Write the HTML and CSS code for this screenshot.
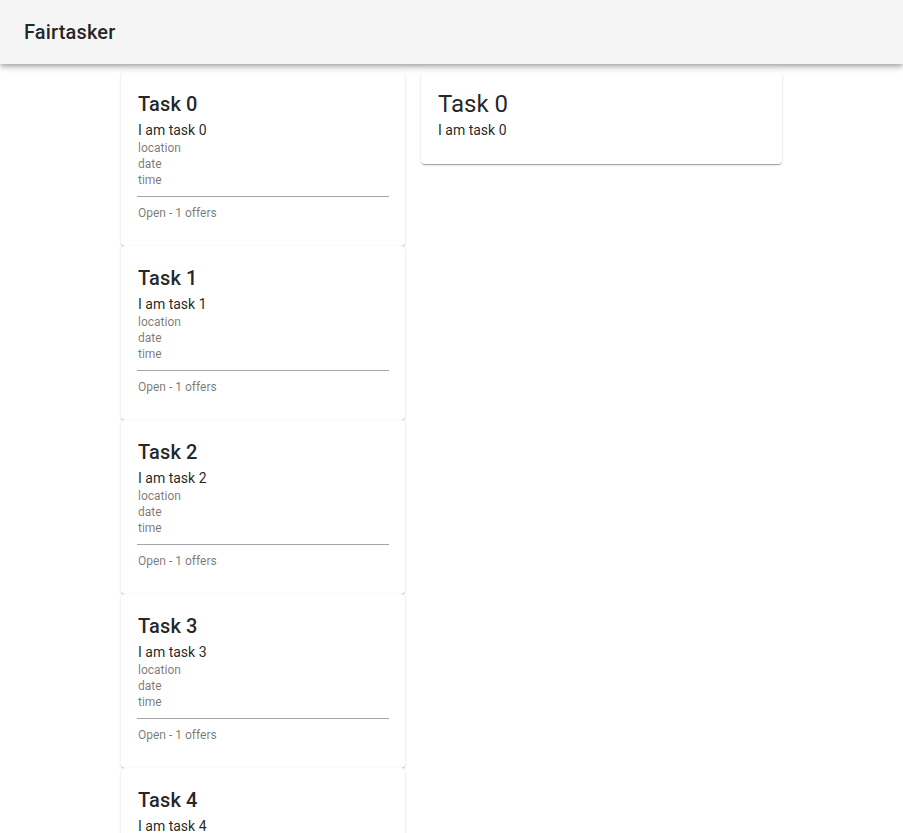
FILE: index.html
```html
<!DOCTYPE html>
<html>
<head>
<meta charset="utf-8">
<title>Fairtasker</title>
<link rel="stylesheet" href="styles.css">
</head>
<body>
<header class="appbar">
  <h1 class="brand">Fairtasker</h1>
</header>
<main class="layout">
  <section class="task-list">
    <article class="card">
      <h2 class="task-title">Task 0</h2>
      <p class="task-desc">I am task 0</p>
      <p class="meta">location</p>
      <p class="meta">date</p>
      <p class="meta">time</p>
      <hr class="divider">
      <p class="meta status">Open - 1 offers</p>
    </article>
    <article class="card">
      <h2 class="task-title">Task 1</h2>
      <p class="task-desc">I am task 1</p>
      <p class="meta">location</p>
      <p class="meta">date</p>
      <p class="meta">time</p>
      <hr class="divider">
      <p class="meta status">Open - 1 offers</p>
    </article>
    <article class="card">
      <h2 class="task-title">Task 2</h2>
      <p class="task-desc">I am task 2</p>
      <p class="meta">location</p>
      <p class="meta">date</p>
      <p class="meta">time</p>
      <hr class="divider">
      <p class="meta status">Open - 1 offers</p>
    </article>
    <article class="card">
      <h2 class="task-title">Task 3</h2>
      <p class="task-desc">I am task 3</p>
      <p class="meta">location</p>
      <p class="meta">date</p>
      <p class="meta">time</p>
      <hr class="divider">
      <p class="meta status">Open - 1 offers</p>
    </article>
    <article class="card">
      <h2 class="task-title">Task 4</h2>
      <p class="task-desc">I am task 4</p>
      <p class="meta">location</p>
      <p class="meta">date</p>
      <p class="meta">time</p>
      <hr class="divider">
      <p class="meta status">Open - 1 offers</p>
    </article>
  </section>
  <section class="detail">
    <article class="card">
      <h2 class="detail-title">Task 0</h2>
      <p class="task-desc">I am task 0</p>
    </article>
  </section>
</main>
</body>
</html>
```
FILE: styles.css
```css
* { box-sizing: border-box; }
html, body {
  margin: 0;
  padding: 0;
  background: #ffffff;
  font-family: Roboto, "Liberation Sans", sans-serif;
  color: rgba(0, 0, 0, 0.87);
}
.appbar {
  height: 64px;
  background: #f5f5f5;
  display: flex;
  align-items: center;
  padding: 0 24px;
  box-shadow: 0 2px 4px -1px rgba(0,0,0,0.2), 0 4px 5px 0 rgba(0,0,0,0.14), 0 1px 10px 0 rgba(0,0,0,0.12);
  position: relative;
  z-index: 2;
}
.brand {
  margin: 0;
  font-size: 20px;
  font-weight: 500;
  line-height: 1.6;
  letter-spacing: 0.0075em;
}
.layout {
  display: flex;
  justify-content: center;
  align-items: flex-start;
  gap: 16px;
  padding-top: 8px;
}
.task-list {
  width: 284px;
  display: flex;
  flex-direction: column;
}
.detail {
  width: 361px;
}
.card {
  background: #fff;
  border-radius: 4px;
  padding: 16px 16px 24px 17px;
  box-shadow: 0 2px 1px -1px rgba(0,0,0,0.2), 0 1px 1px 0 rgba(0,0,0,0.14), 0 1px 3px 0 rgba(0,0,0,0.12);
}
.task-title {
  margin: 0;
  font-size: 20px;
  font-weight: 500;
  line-height: 33px;
  letter-spacing: 0.0075em;
}
.detail-title {
  margin: 0;
  font-size: 24px;
  font-weight: 400;
  line-height: 33px;
}
.task-desc {
  margin: 0;
  font-size: 14px;
  line-height: 19px;
  letter-spacing: 0;
}
.meta {
  margin: 0;
  font-size: 12px;
  line-height: 16px;
  color: rgba(0, 0, 0, 0.54);
  letter-spacing: 0;
}
.status {
  line-height: 17px;
}
.divider {
  margin: 8px 0 8px -1px;
  border: 0;
  border-top: 1px solid #a6a6a6;
  height: 0;
}
```
